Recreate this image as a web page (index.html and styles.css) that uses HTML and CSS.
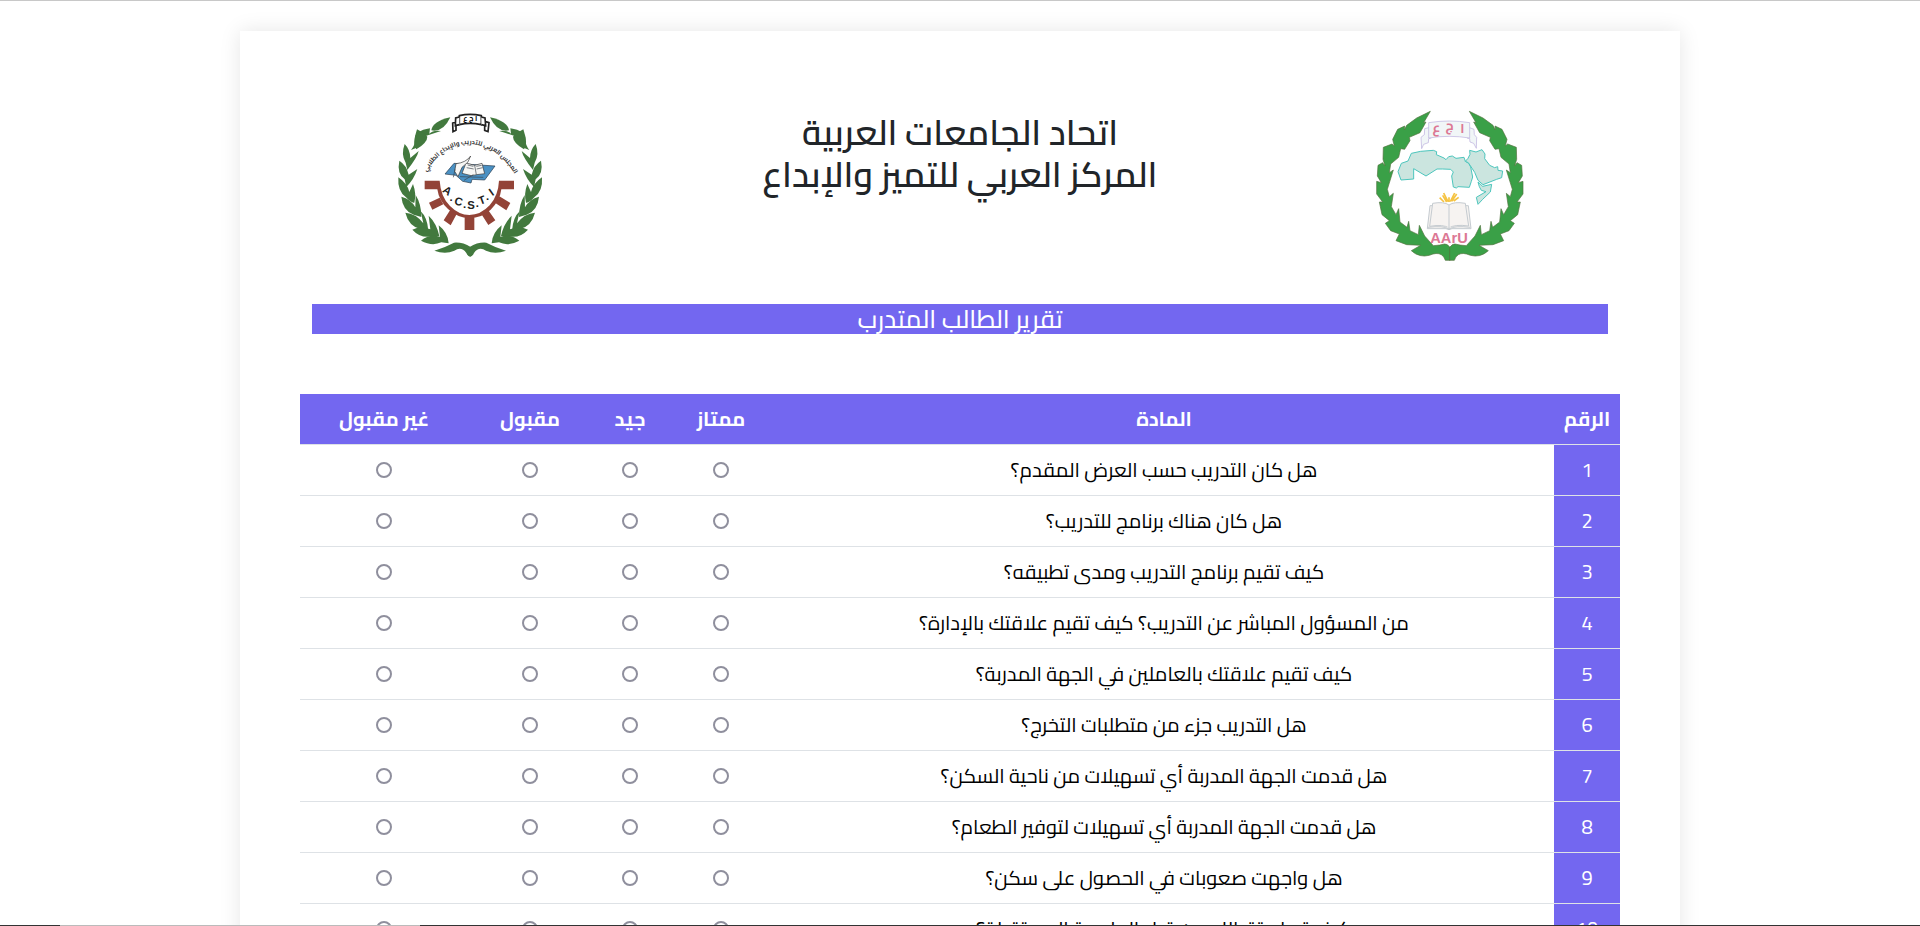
FILE: index.html
```html
<!DOCTYPE html>
<html lang="ar" dir="rtl">
<head>
<meta charset="utf-8">
<title>تقرير الطالب المتدرب</title>
<link rel="stylesheet" href="styles.css">
</head>
<body>
<main class="sheet">
  <header class="masthead">
    <svg class="logo" viewBox="0 0 540 510" role="img" aria-label="AArU">
      <defs>
        <g id="half-wreath">
          <path d="M211 34 L170 54 L140 76 L133 90 L134 78 L113 88 L98 118 L103 138 L96 132 L70 142 L69 178 L75 198 L68 188 L54 196 L52 228 L64 248 L50 244 L50 282 L68 306 L58 306 L66 344 L88 362 L76 370 L92 392 L118 402 L108 422 L140 434 L182 436 L154 452 Q178 474 208 466 Q230 456 244 464 Q252 468 256 481 L270 481 L270 442 Q262 431 254 432 Q240 436 220 437 L194 408 L178 376 L175 404 L150 392 L146 364 L141 382 L120 366 L116 326 L108 344 L94 320 L100 280 L88 290 L82 268 L100 210 L88 218 L92 192 L116 172 L122 146 L134 148 L150 122 L148 112 L180 98 L198 66 L191 68 Z"/>
        </g>
      </defs>
      <g class="aaru-wreath">
        <use href="#half-wreath"/>
        <use href="#half-wreath" transform="translate(539 0) scale(-1 1)"/>
      </g>
      <g class="ribbon">
        <path d="M206 83 L194 86 L193 104 L183 112 L185 146 L191 133 L205 128 L206 116 L214 114"/>
        <path d="M329 83 L342 88 L343 104 L350 112 L349 145 L341 130 L330 126 L329 116 L321 114"/>
        <path d="M206 68 Q268 58 329 68 L329 114 Q268 104 206 114 Z"/>
      </g>
      <text class="ribbon-text" x="229" y="96">ع</text>
      <text class="ribbon-text" x="269" y="90">ج</text>
      <text class="ribbon-text" x="307" y="99">ا</text>
      <g class="map">
        <path d="M154 160 L182 154 L220 151 L230 155 L229 164 L252 174 L258 179 L266 170 L277 168 L288 175 L312 172 L316 184 L326 190 L332 201 L338 231 L334 244 L328 262 L294 260 L289 264 L280 261 L275 228 L280 216 L272 208 L248 207 L231 207 L198 228 L161 206 L161 237 L123 240 L114 215 L124 190 L144 183 Z"/>
        <path d="M329 151 L348 156 L366 149 L375 162 L374 176 L389 196 L404 203 L413 200 L414 211 L428 213 L425 233 L410 238 L369 254 L354 241 L344 217 L325 188 L316 184 L324 175 L330 163 Z"/>
        <path d="M354 246 L368 259 L395 253 L391 276 L368 298 L354 313 L349 292 L378 275 L364 271 L358 260 Z"/>
      </g>
      <path class="rays" d="M239 293 L252 306 M251 279 L264 305 M248 286 L260 306 M284 279 L271 305 M290 282 L275 304 M296 292 L281 303 M267 292 L267 306"/>
      <g class="book">
        <path d="M210 317 L202 386 L258 386 L267 389 L276 386 L333 386 L325 317 Z"/>
        <path d="M218 310 Q252 304 267 315 Q282 304 316 310 L326 378 Q284 372 267 384 Q250 372 209 379 Z"/>
        <path d="M267 315 V387 M204 382 Q250 376 267 387 Q284 376 331 382"/>
      </g>
      <text class="aaru-name" x="267" y="429">AArU</text>
    </svg>
    <h1 class="org">اتحاد الجامعات العربية<br>المركز العربي للتميز والإبداع</h1>
    <svg class="logo" viewBox="0 0 540 510" role="img" aria-label="A.C.S.T.I">
      <defs>
        <g id="leaf-half">
          <path d="M211 52 Q158 64 154 91 Q190 98 211 52"/>
          <path d="M150 85 Q104 92 104 119 Q106 134 93 150 Q128 140 137 108 L183 93 Q160 89 148 101 Z"/>
          <path d="M111 88 Q96 132 109 148 Q142 128 142 110 Q134 100 111 88"/>
          <path d="M74 132 Q62 164 77 188 L82 210 Q112 172 116 153 L91 174 Q90 148 74 132"/>
          <path d="M58 182 Q50 220 74 238 L79 261 Q102 238 112 207 L86 224 Q80 196 58 182"/>
          <path d="M55 232 Q52 274 78 292 Q94 310 103 308 Q110 282 99 252 L88 276 Q82 250 55 232"/>
          <path d="M64 290 Q68 332 101 344 L124 351 Q124 312 107 285 L106 322 Q92 296 64 290"/>
          <path d="M76 338 Q86 378 121 387 L145 392 Q142 352 122 334 L130 370 Q108 340 76 338"/>
          <path d="M97 389 Q120 414 150 410 L178 408 Q170 370 146 347 L151 388 Q122 376 97 389"/>
          <path d="M123 422 Q156 440 184 427 L206 430 Q204 398 176 376 L180 410 Q148 400 123 422"/>
          <path d="M163 452 Q196 442 222 428 Q248 426 272 441 L272 470 Q263 470 259 459 Q244 438 223 452 Q196 464 163 452"/>
        </g>
        <path id="logo-arc" d="M134 226 Q182 134 268 132 Q354 134 410 232"/>
      </defs>
      <g class="acsti-wreath">
        <use href="#leaf-half"/>
        <use href="#leaf-half" transform="translate(541 0) scale(-1 1)"/>
      </g>
      <g class="banner">
        <path d="M238 47 Q270 39 304 47 L304 74 Q270 66 238 74 Z"/>
        <path d="M238 51 L227 54 L226 77 L238 74 M227 66 L218 69 L219 95 L228 91 V78 M304 51 L315 54 L317 77 L304 74 M317 65 L327 68 L324 95 L314 91 V78"/>
      </g>
      <text class="banner-text" x="271" y="64">ا ج ع</text>
      <text class="arc-text"><textPath href="#logo-arc" startOffset="50%">المجلس العربي للتدريب والإبداع الطلابي</textPath></text>
      <g class="cap">
        <path class="cap-blue" d="M195 222 L222 190 L345 198 L314 240 L276 238 L273 249 L248 244 L228 226 Z"/>
        <path class="cap-page" d="M258 189 L246 220 L274 227 L290 224 L314 221 L306 190 L284 196 Z"/>
        <path class="cap-page" d="M228 191 Q258 188 272 168 Q268 188 246 202 L234 230 L224 214 Z"/>
        <path class="cap-line" d="M284 196 L289 224 M263 195 L280 199 M260 203 L281 207 M289 199 L305 196 M290 207 L308 203 M225 208 L220 232 M240 230 L310 232 M252 241 L280 224"/>
      </g>
      <g class="gear">
        <path d="M134 242 H179 Q182 290 210 318 Q237 345 268 345 Q302 345 329 316 Q355 286 357 242 H402 V268 H364 Q360 302 332 329 Q306 354 268 354 Q233 354 204 327 Q177 303 172 268 H134 Z"/>
        <path d="M147 308 L179 293 L190 313 L157 329 Z M191 361 L211 329 L230 342 L212 376 Z M254 351 H283 V390 H254 Z M304 342 L325 331 L346 361 L325 375 Z M346 309 L358 289 L391 309 L379 331 Z"/>
      </g>
      <g class="acsti-name">
        <text x="202" y="284" transform="rotate(35 202 272)">A</text>
        <text x="213" y="302">.</text>
        <text x="236" y="316" transform="rotate(14 236 305)">C</text>
        <text x="254" y="324">.</text>
        <text x="273" y="327">S</text>
        <text x="292" y="321">.</text>
        <text x="306" y="312" transform="rotate(-20 306 302)">T</text>
        <text x="323" y="300">.</text>
        <text x="334" y="288" transform="rotate(-35 334 276)">I</text>
      </g>
    </svg>
  </header>

  <h2 class="report-title">تقرير الطالب المتدرب</h2>

  <table class="survey">
    <colgroup><col class="c-num"><col><col class="c-great"><col class="c-good"><col class="c-fair"><col class="c-poor"></colgroup>
    <thead>
      <tr><th scope="col">الرقم</th><th scope="col">المادة</th><th scope="col" id="great">ممتاز</th><th scope="col" id="good">جيد</th><th scope="col" id="fair">مقبول</th><th scope="col" id="poor">غير مقبول</th></tr>
    </thead>
    <tbody>
      <tr><th scope="row">1</th><td id="q1">هل كان التدريب حسب العرض المقدم؟</td><td><input type="radio" name="r1" aria-labelledby="q1 great"></td><td><input type="radio" name="r1" aria-labelledby="q1 good"></td><td><input type="radio" name="r1" aria-labelledby="q1 fair"></td><td><input type="radio" name="r1" aria-labelledby="q1 poor"></td></tr>
      <tr><th scope="row">2</th><td id="q2">هل كان هناك برنامج للتدريب؟</td><td><input type="radio" name="r2" aria-labelledby="q2 great"></td><td><input type="radio" name="r2" aria-labelledby="q2 good"></td><td><input type="radio" name="r2" aria-labelledby="q2 fair"></td><td><input type="radio" name="r2" aria-labelledby="q2 poor"></td></tr>
      <tr><th scope="row">3</th><td id="q3">كيف تقيم برنامج التدريب ومدى تطبيقه؟</td><td><input type="radio" name="r3" aria-labelledby="q3 great"></td><td><input type="radio" name="r3" aria-labelledby="q3 good"></td><td><input type="radio" name="r3" aria-labelledby="q3 fair"></td><td><input type="radio" name="r3" aria-labelledby="q3 poor"></td></tr>
      <tr><th scope="row">4</th><td id="q4">من المسؤول المباشر عن التدريب؟ كيف تقيم علاقتك بالإدارة؟</td><td><input type="radio" name="r4" aria-labelledby="q4 great"></td><td><input type="radio" name="r4" aria-labelledby="q4 good"></td><td><input type="radio" name="r4" aria-labelledby="q4 fair"></td><td><input type="radio" name="r4" aria-labelledby="q4 poor"></td></tr>
      <tr><th scope="row">5</th><td id="q5">كيف تقيم علاقتك بالعاملين في الجهة المدربة؟</td><td><input type="radio" name="r5" aria-labelledby="q5 great"></td><td><input type="radio" name="r5" aria-labelledby="q5 good"></td><td><input type="radio" name="r5" aria-labelledby="q5 fair"></td><td><input type="radio" name="r5" aria-labelledby="q5 poor"></td></tr>
      <tr><th scope="row">6</th><td id="q6">هل التدريب جزء من متطلبات التخرج؟</td><td><input type="radio" name="r6" aria-labelledby="q6 great"></td><td><input type="radio" name="r6" aria-labelledby="q6 good"></td><td><input type="radio" name="r6" aria-labelledby="q6 fair"></td><td><input type="radio" name="r6" aria-labelledby="q6 poor"></td></tr>
      <tr><th scope="row">7</th><td id="q7">هل قدمت الجهة المدربة أي تسهيلات من ناحية السكن؟</td><td><input type="radio" name="r7" aria-labelledby="q7 great"></td><td><input type="radio" name="r7" aria-labelledby="q7 good"></td><td><input type="radio" name="r7" aria-labelledby="q7 fair"></td><td><input type="radio" name="r7" aria-labelledby="q7 poor"></td></tr>
      <tr><th scope="row">8</th><td id="q8">هل قدمت الجهة المدربة أي تسهيلات لتوفير الطعام؟</td><td><input type="radio" name="r8" aria-labelledby="q8 great"></td><td><input type="radio" name="r8" aria-labelledby="q8 good"></td><td><input type="radio" name="r8" aria-labelledby="q8 fair"></td><td><input type="radio" name="r8" aria-labelledby="q8 poor"></td></tr>
      <tr><th scope="row">9</th><td id="q9">هل واجهت صعوبات في الحصول على سكن؟</td><td><input type="radio" name="r9" aria-labelledby="q9 great"></td><td><input type="radio" name="r9" aria-labelledby="q9 good"></td><td><input type="radio" name="r9" aria-labelledby="q9 fair"></td><td><input type="radio" name="r9" aria-labelledby="q9 poor"></td></tr>
      <tr><th scope="row">10</th><td id="q10">كيف تم استقبالك من قبل الجامعة المستقبلة؟</td><td><input type="radio" name="r10" aria-labelledby="q10 great"></td><td><input type="radio" name="r10" aria-labelledby="q10 good"></td><td><input type="radio" name="r10" aria-labelledby="q10 fair"></td><td><input type="radio" name="r10" aria-labelledby="q10 poor"></td></tr>
    </tbody>
  </table>
</main>
<div class="edge"></div>
</body>
</html>
```
FILE: styles.css
```css
* { box-sizing: border-box; }

html { overflow: hidden; }

body {
  margin: 0;
  height: 100vh;
  overflow: hidden;
  padding-top: 30px;
  border-top: 1px solid #c8c8c8;
  background: #fff;
  color: #212529;
  font-family: Cairo, "DejaVu Sans", sans-serif;
}

.sheet {
  width: 75%;
  margin: 0 auto;
  padding: 72px 60px 60px;
  background: #fff;
  box-shadow: 0 0 20px rgba(0, 0, 0, .1);
}

.masthead {
  display: grid;
  grid-template-columns: 1fr 2fr 1fr;
  justify-items: center;
  align-items: start;
  padding: 0 7px;
}

.logo { width: 180px; height: 170px; margin-top: -3px; }

.org {
  margin: 8px 0 0;
  font-size: 35px;
  font-weight: 600;
  line-height: 42px;
  text-align: center;
  white-space: nowrap;
}

.report-title {
  margin: 34px 12px 60px;
  background: #7367f0;
  color: #fff;
  font-size: 25px;
  font-weight: 500;
  line-height: 30px;
  text-align: center;
}

.survey {
  width: 100%;
  table-layout: fixed;
  border-collapse: separate;
  border-spacing: 0;
  color: #000;
  font-size: 20px;
  line-height: 30px;
  text-align: center;
}

.c-num { width: 66px; }
.c-great { width: 106px; }
.c-good { width: 76px; }
.c-fair { width: 124px; }
.c-poor { width: 168px; }

.survey th, .survey td {
  padding: 10px 0;
  border-bottom: 1px solid #dee2e6;
  vertical-align: middle;
}

.survey th { background: #7367f0; color: #fff; }
.survey tbody th { font-weight: 400; }

.survey input {
  appearance: none;
  display: block;
  width: 16px;
  height: 16px;
  margin: 0 auto;
  border: 2px solid #8f8f9d;
  border-radius: 50%;
  background: #fff;
}

.edge {
  position: fixed;
  inset: auto 0 0;
  height: 1px;
  background: linear-gradient(to right, #333 60px, #bbb 60px, #bbb 420px, #333 420px);
}

.aaru-wreath { fill: #3aa047; stroke: #53733f; stroke-width: 2; }
.ribbon { fill: #f1f6f7; stroke: #b9addd; stroke-width: 2; }
.ribbon-text, .aaru-name { fill: #dc7894; font-weight: 700; text-anchor: middle; }
.ribbon-text { font-size: 40px; }
.aaru-name { font-family: "Liberation Sans", sans-serif; font-size: 44px; direction: ltr; }
.map { fill: #cbe5df; stroke: #4dc6bd; stroke-width: 3; stroke-linejoin: round; }
.rays { fill: none; stroke: #f5c342; stroke-width: 5; }
.book { fill: #f6f3f1; stroke: #c5cbd0; stroke-width: 3; }

.acsti-wreath { fill: #42793e; }
.banner { fill: #fff; stroke: #222; stroke-width: 5; }
.banner-text { font-size: 22px; font-weight: 700; text-anchor: middle; }
.arc-text { font-size: 19px; font-weight: 700; text-anchor: middle; fill: #333; }
.cap-blue { fill: #4a91c4; stroke: #25384a; stroke-width: 2; }
.cap-page { fill: #f7f7f5; stroke: #333; stroke-width: 2; }
.cap-line { fill: none; stroke: #39434c; stroke-width: 2; }
.gear { fill: #934337; }
.acsti-name {
  fill: #222;
  font-family: "Liberation Sans", sans-serif;
  font-size: 34px;
  font-weight: 700;
  text-anchor: middle;
  direction: ltr;
}
```
